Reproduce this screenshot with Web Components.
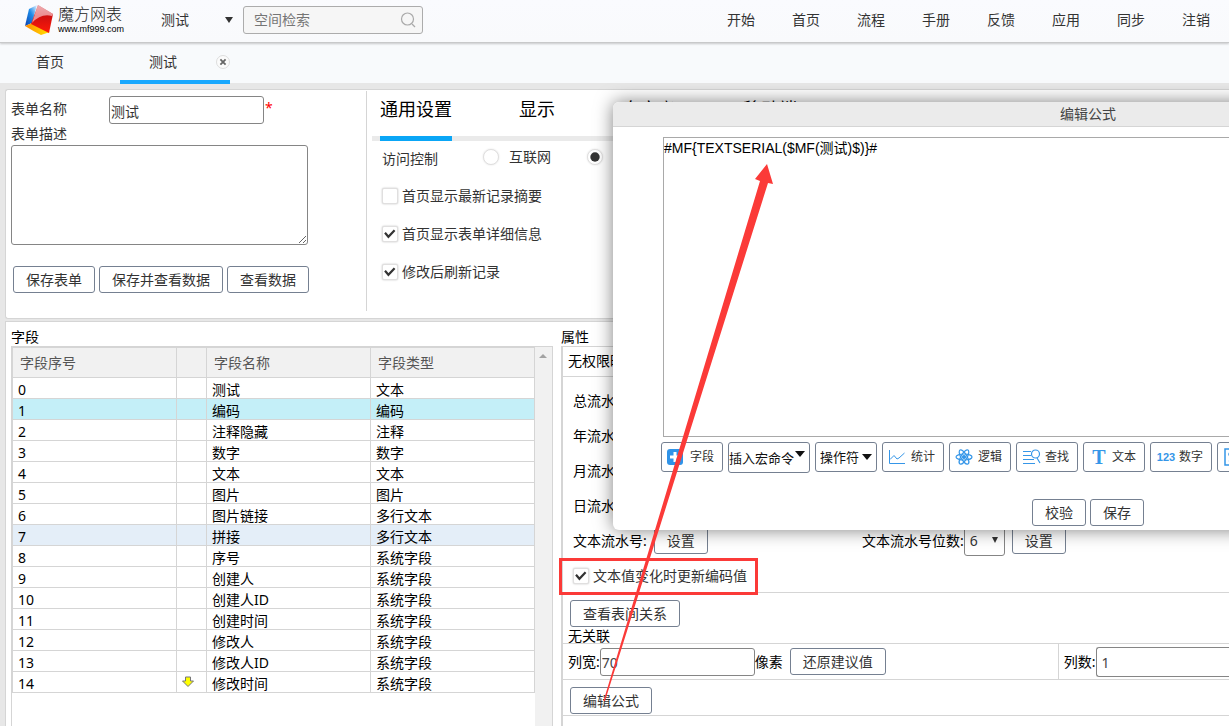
<!DOCTYPE html>
<html lang="zh-CN">
<head>
<meta charset="utf-8">
<title>魔方网表</title>
<style>
  html, body { margin: 0; height: 100%; }
  body {
    overflow: hidden;
    background: #e7e7e7;
    color: #333;
    font: 14px/20px "Noto Sans", "Noto Sans CJK SC", sans-serif;
  }
</style>
</head>
<body>
<mf-app></mf-app>
<script>
const base = `
  *, *::before, *::after { box-sizing: border-box; }
  input, textarea, select, button { font: inherit; color: #333; margin: 0; }
  .text {
    height: 28px; padding: 2px 1px 0; border: 1px solid #858585;
    border-radius: 3px; background: #fff; outline: none;
  }
`;

function define(name, css, html) {
  const tpl = document.createElement('template');
  tpl.innerHTML = `<style>${base}${css}</style>${html}`;
  customElements.define(name, class extends HTMLElement {
    constructor() {
      super();
      this.attachShadow({ mode: 'open' }).append(tpl.content.cloneNode(true));
    }
  });
}

/* ---------- controls ---------- */
define('mf-button', `
  :host { display: inline-block; }
  button {
    display: block; width: 100%; height: 27px; padding: 1px 12px 0; line-height: 24px;
    border: 1px solid #758091; border-radius: 3px; background: #fff; white-space: nowrap;
  }`, `<button type="button"><slot></slot></button>`);

define('mf-tool', `
  :host { display: block; flex: none; }
  button {
    display: flex; align-items: center; justify-content: space-between;
    width: 62px; height: 30px; padding: 0 8px 0 5px; line-height: 18px; font-size: 12px;
    border: 1px solid #758091; border-radius: 3px; background: #fff; white-space: nowrap;
  }
  ::slotted(svg) { display: block; flex: none; }`,
  `<button type="button"><slot name="icon"></slot><slot></slot></button>`);

customElements.define('mf-check', class extends HTMLElement {
  constructor() {
    super();
    const type = this.getAttribute('type') || 'checkbox';
    const on = this.hasAttribute('checked') ? 'checked' : '';
    this.attachShadow({ mode: 'open' }).innerHTML = `<style>${base}
      :host { display: block; }
      label { display: flex; align-items: center; gap: 4px; white-space: nowrap; }
      label.radio { gap: 10px; }
      .box { display: grid; flex: none; width: 16px; height: 16px; }
      .box > * { grid-area: 1 / 1; }
      input {
        appearance: none; width: 16px; height: 16px; background: #fff;
        border: 1px solid #e0dfdf; border-radius: 2px; box-shadow: 0 0 2px rgba(0,0,0,.25);
      }
      .radio input { border-radius: 50%; box-shadow: 0 0 2px rgba(0,0,0,.12); }
      svg { width: 16px; height: 16px; visibility: hidden; pointer-events: none; z-index: 1; }
      input:checked + svg { visibility: visible; }
    </style>
    <label class="${type}"><span class="box"><input type="${type}" ${on}>
      <svg viewBox="0 0 16 16">${type === 'radio'
        ? '<circle cx="8" cy="8" r="4.700" fill="#333"/>'
        : '<path d="M3 6.800 6.400 10.800 12.600 4.200" fill="none" stroke="#333" stroke-width="2.200"/>'}</svg>
    </span><slot></slot></label>`;
  }
});

/* ---------- header ---------- */
define('mf-header', `
  :host {
    display: flex; align-items: center; height: 43px; padding: 0 19px 3px 24px;
    background: linear-gradient(#fafbfe, #f9fafc); border-bottom: 1px solid #c8c9ca;
    box-shadow: 0 1px 2px rgba(0,0,0,.2); position: relative; z-index: 1;
  }
  .logo { display: flex; align-items: center; gap: 4px; width: 137px; color: #222; }
  .logo svg { flex: none; }
  .brand b { display: block; height: 19px; font: 300 16px/18px "Noto Sans CJK SC", sans-serif; white-space: nowrap; }
  .brand small { display: block; height: 13px; font: 9px/12px "Liberation Sans", sans-serif; color: #000; }
  .space { display: grid; align-items: center; width: 74px; }
  .space > * { grid-area: 1 / 1; }
  .space select { appearance: none; border: 0; background: none; padding: 0; line-height: 20px; }
  .space svg { justify-self: end; pointer-events: none; }
  .search {
    display: flex; align-items: center; width: 180px; height: 28px; margin-left: 8px; padding: 0 6px 0 10px;
    border: 1px solid #acacac; border-radius: 3px; background: #f6f6f6;
  }
  .search input { flex: 1; min-width: 0; border: 0; padding: 0; background: none; outline: none; }
  .search input::placeholder { color: #757575; opacity: 1; }
  nav { display: flex; gap: 37px; margin-left: auto; }
  a { color: #333; text-decoration: none; white-space: nowrap; }`, `
  <div class="logo">
    <svg width="30" height="32" viewBox="0 0 30 32" role="img" aria-label="魔方网表">
      <defs>
        <linearGradient id="r" x1="0" y1="0" x2="0" y2="1"><stop offset="0" stop-color="#d88088"/><stop offset=".4" stop-color="#d01010"/><stop offset="1" stop-color="#ff1a08"/></linearGradient>
        <linearGradient id="b" x1="0" y1="1" x2="1" y2="0"><stop offset="0" stop-color="#0b3fae"/><stop offset=".55" stop-color="#1c8be8"/><stop offset="1" stop-color="#eaf4ff"/></linearGradient>
        <linearGradient id="y" x1="0" y1="0" x2="1" y2="0"><stop offset="0" stop-color="#ff8a00"/><stop offset="1" stop-color="#ffe600"/></linearGradient>
      </defs>
      <path d="M13 1 5 5 1 22 8 19Z" fill="url(#b)"/>
      <path d="M1 22 8 19 26 28 17 31Q9 27 1 22Z" fill="url(#y)"/>
      <path d="M14 1 29 10 25 29 7 20Z" fill="url(#r)"/>
      <path d="M14 1 29 10 28 12Q17 9 8 19Z" fill="#f4b8bc" opacity=".75"/>
    </svg>
    <div class="brand"><b>魔方网表</b><small>www.mf999.com</small></div>
  </div>
  <div class="space">
    <select aria-label="空间"><option>测试</option></select>
    <svg width="12" height="8" viewBox="0 0 12 8"><path d="M2 1h8L6 7z" fill="#333"/></svg>
  </div>
  <div class="search">
    <input type="search" placeholder="空间检索" aria-label="空间检索">
    <svg width="16" height="16" viewBox="0 0 16 16" fill="none" stroke="#a9a9a9" stroke-width="1.2"><circle cx="7.500" cy="7" r="6"/><path d="m12 12 3 3"/></svg>
  </div>
  <nav><a href="#">开始</a><a href="#">首页</a><a href="#">流程</a><a href="#">手册</a><a href="#">反馈</a><a href="#">应用</a><a href="#">同步</a><a href="#">注销</a></nav>`);

define('mf-tabs', `
  :host { display: flex; align-items: flex-start; height: 40px; background: #f8fafc; }
  a { display: flex; align-items: center; justify-content: center; height: 38px; color: #333; text-decoration: none; }
  .home { width: 100px; margin-right: 20px; }
  .current { width: 110px; height: 41px; border-bottom: 4px solid #18a8fe; display: grid; grid-template-columns: 1fr 14px; padding-left: 12px; }
  .current a { padding-right: 22px; }
  button { align-self: center; width: 14px; height: 14px; padding: 0; border: 0; background: none; }
  svg { display: block; }`, `
  <a class="home" href="#">首页</a>
  <div class="current"><a href="#">测试</a>
    <button type="button" aria-label="关闭"><svg width="14" height="14" viewBox="0 0 14 14"><circle cx="7" cy="7" r="6.500" fill="#fbfbfb" stroke="#ddd"/><path d="m4.400 4.400 5.200 5.200m0-5.200-5.200 5.200" stroke="#666" stroke-width="1.800"/></svg></button>
  </div>`);

/* ---------- form settings ---------- */
define('mf-form', `
  :host { display: block; width: 361px; flex: none; padding: 5px 0 0 5px; border-right: 1px solid #d5d5d5; margin: 1px 0 7px; height: 220px; }
  .name { display: flex; height: 28px; }
  .name label { width: 98px; padding-top: 3px; }
  .name .text { width: 155px; }
  .req { color: #f00; line-height: 24px; padding-left: 1px; }
  .desc { display: block; margin-bottom: 1px; line-height: 20px; }
  textarea { display: block; width: 297px; height: 100px; border: 1px solid #858585; border-radius: 3px; background: #fff; }
  .actions { display: flex; gap: 4px; padding: 21px 0 0 2px; }`, `
  <div class="name"><label for="n">表单名称</label><input class="text" id="n" value="测试"><span class="req">*</span></div>
  <label class="desc" for="d">表单描述</label>
  <textarea id="d"></textarea>
  <div class="actions"><mf-button>保存表单</mf-button><mf-button>保存并查看数据</mf-button><mf-button>查看数据</mf-button></div>`);

define('mf-settings', `
  :host { display: block; flex: 1; min-width: 0; padding-left: 5px; }
  .tabs { display: flex; gap: 67px; padding-left: 8px; border-bottom: 5px solid #eaeaea; height: 51px; }
  .tabs a { flex: none; height: 51px; padding-top: 6px; font-size: 18px; line-height: 26px; color: #000; text-decoration: none; }
  .tabs a.on { border-bottom: 5px solid #0aa6f6; }
  .body { padding: 5px 0 0 10px; }
  .access { display: flex; height: 26px; }
  .access span { width: 101px; padding-top: 3px; }
  .access mf-check { padding-top: 1px; }
  .access mf-check + mf-check { margin-left: 36px; }
  .options { display: grid; gap: 18px; padding-top: 14px; }`, `
  <div class="tabs"><a class="on" href="#">通用设置</a><a href="#">显示</a><a href="#">自定义</a><a href="#">移动端</a></div>
  <div class="body">
    <div class="access"><span>访问控制</span><mf-check type="radio">互联网</mf-check><mf-check type="radio" checked>内部</mf-check></div>
    <div class="options"><mf-check>首页显示最新记录摘要</mf-check><mf-check checked>首页显示表单详细信息</mf-check><mf-check checked>修改后刷新记录</mf-check></div>
  </div>`);

/* ---------- field list ---------- */
const fields = [['测试','文本'],['编码','编码'],['注释隐藏','注释'],['数字','数字'],['文本','文本'],['图片','图片'],
  ['图片链接','多行文本'],['拼接','多行文本'],['序号','系统字段'],['创建人','系统字段'],['创建人ID','系统字段'],
  ['创建时间','系统字段'],['修改人','系统字段'],['修改人ID','系统字段'],['修改时间','系统字段']];
const arrow = '<svg width="12" height="12" viewBox="0 0 12 12"><path d="M3.500 1h5v4h3L6 10.500.500 5h3z" fill="#ff0" stroke="#777"/></svg>';
define('mf-fields', `
  :host { display: flex; flex-direction: column; width: 542px; flex: none; color: #000; }
  h2 { margin: 0; font: inherit; line-height: 20px; height: 19px; }
  .frame { display: flex; flex: 1; border: 1px solid #d5d5d5; border-bottom: 0; }
  .list { flex: 1; border: solid #d5d5d5; border-width: 1px 0 0; }
  table { width: 100%; table-layout: fixed; border-collapse: separate; border-spacing: 0; border-left: 1px solid #d5d5d5; }
  th, td { border: solid #d5d5d5; border-width: 0 1px 1px 0; text-align: left; font-weight: normal; white-space: nowrap; }
  th { height: 30px; padding: 0 7px; background: #f1f1f1; color: #555; }
  td { height: 21px; padding: 4px 5px 0; line-height: 16px; }
  td svg { display: block; margin-bottom: 4px; }
  .sel td { background: #c4eff8; }
  .hover td { background: #e4eef8; }
  .bar { width: 17px; background: #f1f1f1; padding: 7px 0 0 4px; }
  .bar svg { display: block; }`, `
  <h2>字段</h2>
  <div class="frame"><div class="list"><table>
    <colgroup><col><col style="width:30px"><col><col></colgroup>
    <thead><tr><th>字段序号</th><th></th><th>字段名称</th><th>字段类型</th></tr></thead>
    <tbody>${fields.map(([n, t], i) => `<tr class="${i === 1 ? 'sel' : i === 7 ? 'hover' : ''}"><td>${i}</td><td>${i === 14 ? arrow : ''}</td><td>${n}</td><td>${t}</td></tr>`).join('')}</tbody>
  </table></div><div class="bar"><svg width="8" height="4" viewBox="0 0 8 4"><path d="M0 4h8L4 0z" fill="#a3a3a3"/></svg></div></div>`);

/* ---------- properties ---------- */
define('mf-props', `
  :host { display: flex; flex-direction: column; flex: 1; min-width: 0; color: #000; }
  h2 { margin: 0; font: inherit; line-height: 20px; height: 19px; }
  .frame { flex: 1; border: solid #d5d5d5; border-width: 1px 0 0 2px; }
  .row { border-bottom: 1px solid #d5d5d5; padding-left: 5px; white-space: nowrap; }
  .perm { height: 30px; line-height: 28px; }
  .serial { display: grid; grid-template-columns: 289px 1fr; grid-auto-rows: 35px; align-items: center; height: 216px; padding: 6px 0 0 10px; }
  .serial > div { display: flex; align-items: center; }
  .serial mf-button { margin-left: 7px; }
  .serial mf-check { grid-column: 1 / -1; color: #333; }
  .pick { display: grid; align-items: center; width: 41px; }
  .pick > * { grid-area: 1 / 1; }
  .pick select { appearance: none; width: 41px; height: 30px; padding: 0 5px; border: 1px solid #858585; border-radius: 3px; background: #fff; }
  .pick svg { justify-self: end; margin-right: 6px; pointer-events: none; }
  .rel { height: 51px; padding-top: 7px; line-height: 18px; }
  .rel mf-button, .formula mf-button { display: block; width: max-content; margin-left: 2px; }
  .size { display: flex; align-items: center; height: 36px; }
  .size .text { width: 155px; color: #444; }
  .size mf-button { margin-left: 7px; }
  .size .count { display: flex; align-items: center; align-self: stretch; flex: 1; min-width: 170px; margin-left: 172px; border-left: 1px solid #d5d5d5; padding-left: 5px; }
  .size .count .text { flex: 1; height: 30px; min-width: 0; padding-left: 5px; border-right: 0; border-radius: 3px 0 0 3px; }
  .formula { height: 36px; padding-top: 7px; }`, `
  <h2>属性</h2>
  <div class="frame">
    <div class="row perm">无权限时</div>
    <div class="row serial">
      <div>总流水号:</div><div></div>
      <div>年流水号:</div><div></div>
      <div>月流水号:</div><div></div>
      <div>日流水号:</div><div></div>
      <div>文本流水号:<mf-button>设置</mf-button></div>
      <div><label for="digits">文本流水号位数:</label><span class="pick"><select id="digits"><option>6</option></select><svg width="8" height="7" viewBox="0 0 8 7"><path d="M1 0h6L4 6z" fill="#333"/></svg></span><mf-button>设置</mf-button></div>
      <mf-check checked>文本值变化时更新编码值</mf-check>
    </div>
    <div class="row rel"><mf-button>查看表间关系</mf-button>无关联</div>
    <div class="row size"><label for="w">列宽:</label><input class="text" id="w" value="70">像素<mf-button>还原建议值</mf-button>
      <div class="count"><label for="c">列数:</label><input class="text" id="c" value="1"></div></div>
    <div class="row formula"><mf-button>编辑公式</mf-button></div>
  </div>`);

/* ---------- formula dialog ---------- */
define('mf-dialog', `
  :host {
    display: block; position: absolute; left: 613px; top: 102px; width: 950px; z-index: 2;
    background: #fff; border-radius: 6px; box-shadow: 0 0 18px rgba(0,0,0,.5); overflow: hidden;
  }
  h1 { margin: 0; height: 25px; font: inherit; line-height: 24px; text-align: center; color: #444; background: #ebebeb; border-bottom: 1px solid #d5d5d5; }
  textarea {
    display: block; width: 850px; height: 300px; margin: 10px 50px 5px; padding: 0; resize: none; outline: none;
    border: 1px solid #a9a9a9; color: #000; font-family: "Liberation Sans", "Noto Sans CJK SC", sans-serif;
  }
  .tools { display: flex; gap: 5px; margin-left: 48px; }
  .menu { display: grid; align-items: center; height: 30px; flex: none; }
  .menu > * { grid-area: 1 / 1; }
  .menu select { appearance: none; width: 62px; height: 30px; padding: 0 4px; font-size: 13px; color: #111; background: #fff; border: 1px solid #758091; border-radius: 3px; }
  .menu.macro { height: 31px; }
  .menu.macro select { width: 82px; height: 31px; padding: 0; }
  .menu svg { justify-self: end; margin-right: 5px; pointer-events: none; }
  .menu.macro svg { margin-bottom: 8px; }
  .glyph { color: #3596e8; width: 20px; text-align: center; }
  .serif { font: bold 20px/20px "Liberation Serif", serif; }
  .num { font: bold 11px/20px "Liberation Sans", sans-serif; }
  footer { display: flex; justify-content: center; gap: 4px; padding: 26px 0 4px; }`, `
  <h1>编辑公式</h1>
  <textarea aria-label="公式" spellcheck="false">#MF{TEXTSERIAL($MF(测试)$)}#</textarea>
  <div class="tools">
    <mf-tool><svg slot="icon" width="16" height="16" viewBox="0 0 16 16"><rect width="16" height="16" rx="3" fill="#2f93e8"/><path d="M8 3v10M3 8h10" stroke="#fff" stroke-width="3"/></svg>字段</mf-tool>
    <span class="menu macro"><select aria-label="插入宏命令"><option>插入宏命令</option></select><svg width="10" height="6" viewBox="0 0 10 6"><path d="M0 0h10L5 6z" fill="#111"/></svg></span>
    <span class="menu"><select aria-label="操作符"><option>操作符</option></select><svg width="10" height="6" viewBox="0 0 10 6"><path d="M0 0h10L5 6z" fill="#111"/></svg></span>
    <mf-tool><svg slot="icon" width="18" height="18" viewBox="0 0 18 18" fill="none" stroke="#3596e8"><path d="M1.500 2v13.500H17M2 11.500 6 7.500l3 3.500 2-1 5.500-5"/></svg>统计</mf-tool>
    <mf-tool><svg slot="icon" width="18" height="18" viewBox="0 0 18 18" fill="none" stroke="#3596e8" stroke-width="1.200"><ellipse cx="9" cy="9" rx="8" ry="3"/><ellipse cx="9" cy="9" rx="8" ry="3" transform="rotate(60 9 9)"/><ellipse cx="9" cy="9" rx="8" ry="3" transform="rotate(120 9 9)"/><circle cx="9" cy="9" r="1.500" fill="#3596e8"/></svg>逻辑</mf-tool>
    <mf-tool><svg slot="icon" width="19" height="18" viewBox="0 0 19 18" fill="none" stroke="#3596e8" stroke-width="1.200"><path d="M1 3.500h8M1 7.500h8M1 11.500h11M1 15.500h12M15 10l3 5"/><circle cx="13.500" cy="6" r="4"/></svg>查找</mf-tool>
    <mf-tool><span slot="icon" class="glyph serif">T</span>文本</mf-tool>
    <mf-tool><span slot="icon" class="glyph num">123</span>数字</mf-tool>
    <mf-tool aria-label="金额"><svg slot="icon" width="18" height="18" viewBox="0 0 18 18" fill="none" stroke="#3596e8" stroke-width="1.500"><path d="M2 1h14v16H2zM12 5.500C10 4 6 4 6 6.500S12 9 12 11.500 8 14 6 12.500"/></svg></mf-tool>
  </div>
  <footer><mf-button>校验</mf-button><mf-button>保存</mf-button></footer>`);

/* ---------- callout drawn over the page ---------- */
define('mf-callout', `
  :host { display: block; position: absolute; left: 559px; top: 164px; z-index: 3; pointer-events: none; }
  svg { display: block; }`, `
  <svg width="220" height="540" viewBox="0 0 220 540" fill="#fb3a38">
    <rect x="1.500" y="395.500" width="196" height="34" fill="none" stroke="#fb3a38" stroke-width="3"/>
    <path d="M44.500 537 201 17 196 15 208 0 214 20 209 19 46 537Z"/>
  </svg>`);

define('mf-app', `
  :host { display: flex; flex-direction: column; height: 100%; overflow: hidden; position: relative; }
  main { display: flex; flex-direction: column; flex: 1; min-height: 0; gap: 2px; padding: 6px 0 0 5px; }
  section { display: flex; background: #fff; border: 1px solid #d5d5d5; border-right: 0; }
  .top { height: 230px; flex: none; border-radius: 3px 0 0 3px; }
  .bottom { flex: 1; gap: 8px; padding: 5px 0 0 5px; border-bottom: 0; }`, `
  <mf-header></mf-header>
  <mf-tabs></mf-tabs>
  <main>
    <section class="top"><mf-form></mf-form><mf-settings></mf-settings></section>
    <section class="bottom"><mf-fields></mf-fields><mf-props></mf-props></section>
  </main>
  <mf-dialog></mf-dialog>
  <mf-callout></mf-callout>`);
</script>
</body>
</html>
